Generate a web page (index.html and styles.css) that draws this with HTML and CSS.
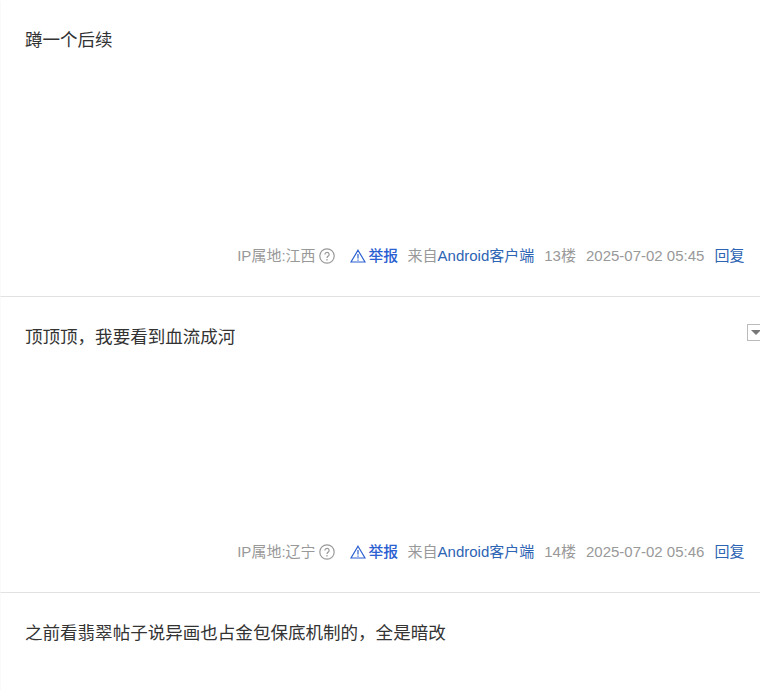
FILE: index.html
```html
<!DOCTYPE html>
<html lang="zh-CN">

<head>
  <meta charset="UTF-8">
  <meta name="viewport" content="width=device-width, initial-scale=1.0">
  <title>帖子</title>
  <link rel="stylesheet" href="styles.css">
</head>

<body>
  <div class="list">
    <div class="post">
      <p class="content">蹲一个后续</p>
      <div class="tail">
        <span class="ip">IP属地:江西</span>
        <svg class="help" viewBox="0 0 16 16">
          <circle cx="8" cy="8" r="7.2" />
          <path d="M5.9 6.5a2.1 2.1 0 1 1 3.4 1.6C8.4 8.7 8 9 8 9.9M8 11.1v1.3" />
        </svg>
        <a class="report" href="#"><svg class="warn" viewBox="0 0 16 14">
            <path d="M8 1.2L15 13H1zM8 5v4.6M8 10.4v1.3" />
          </svg>举报</a>
        <span class="from">来自<a href="#">Android客户端</a></span>
        <span class="floor">13楼</span>
        <span class="time">2025-07-02 05:45</span>
        <a class="reply" href="#">回复</a>
      </div>
    </div>
    <div class="post">
      <div class="head">
        <p class="content">顶顶顶，我要看到血流成河</p>
        <span class="more"></span>
      </div>
      <div class="tail">
        <span class="ip">IP属地:辽宁</span>
        <svg class="help" viewBox="0 0 16 16">
          <circle cx="8" cy="8" r="7.2" />
          <path d="M5.9 6.5a2.1 2.1 0 1 1 3.4 1.6C8.4 8.7 8 9 8 9.9M8 11.1v1.3" />
        </svg>
        <a class="report" href="#"><svg class="warn" viewBox="0 0 16 14">
            <path d="M8 1.2L15 13H1zM8 5v4.6M8 10.4v1.3" />
          </svg>举报</a>
        <span class="from">来自<a href="#">Android客户端</a></span>
        <span class="floor">14楼</span>
        <span class="time">2025-07-02 05:46</span>
        <a class="reply" href="#">回复</a>
      </div>
    </div>
    <div class="post">
      <p class="content">之前看翡翠帖子说异画也占金包保底机制的，全是暗改</p>
    </div>
  </div>
</body>

</html>
```
FILE: styles.css
```css
* {
  margin: 0;
  padding: 0;
  box-sizing: border-box;
}

body {
  background-color: #fff;
  font-family: "Liberation Sans", "Noto Sans CJK SC", sans-serif;
}

a {
  color: #2d64b3;
  text-decoration: none;
}

.list {
  height: 690px;
  padding-top: 1px;
}

.post {
  display: flex;
  flex-direction: column;
  justify-content: space-between;
  height: 296px;
  padding: 25px 15.6px 25px 24px;
  border-left: 1px solid #fafafa;
  border-bottom: 1px solid #e1e1e1;
}

.post:first-child {
  padding-top: 24px;
}

.post:last-child {
  height: 97px;
  border-bottom: 0;
}

.head {
  display: flex;
  justify-content: space-between;
  margin-right: -15.6px;
}

.content {
  font-size: 17.55px;
  line-height: 30px;
  color: #333;
}

/* 右侧下拉按钮 */
.more {
  display: flex;
  justify-content: center;
  align-items: center;
  width: 17px;
  height: 17px;
  margin: 2px -4px 0 0;
  border: 1px solid #bbb;
}

.more::before {
  content: "";
  border: 5px solid transparent;
  border-top-color: #777;
  border-bottom: 0;
}

.tail {
  display: flex;
  justify-content: flex-end;
  align-items: center;
  height: 30px;
  font-size: 15px;
  line-height: 30px;
  color: #999;
  white-space: nowrap;
}

.help {
  width: 16px;
  height: 16px;
  margin: 0 15px 0 3px;
  fill: none;
  stroke: #999;
  stroke-width: 1.2;
}

.report {
  display: flex;
  align-items: center;
  font-size: 14.8px;
  font-weight: 500;
  color: #2b60d1;
}

.warn {
  width: 16px;
  height: 14px;
  margin-right: 3px;
  fill: none;
  stroke: #2b60d1;
  stroke-width: 1.2;
}

.from {
  margin-left: 9.4px;
}

.floor,
.time,
.reply {
  margin-left: 10px;
}
```
